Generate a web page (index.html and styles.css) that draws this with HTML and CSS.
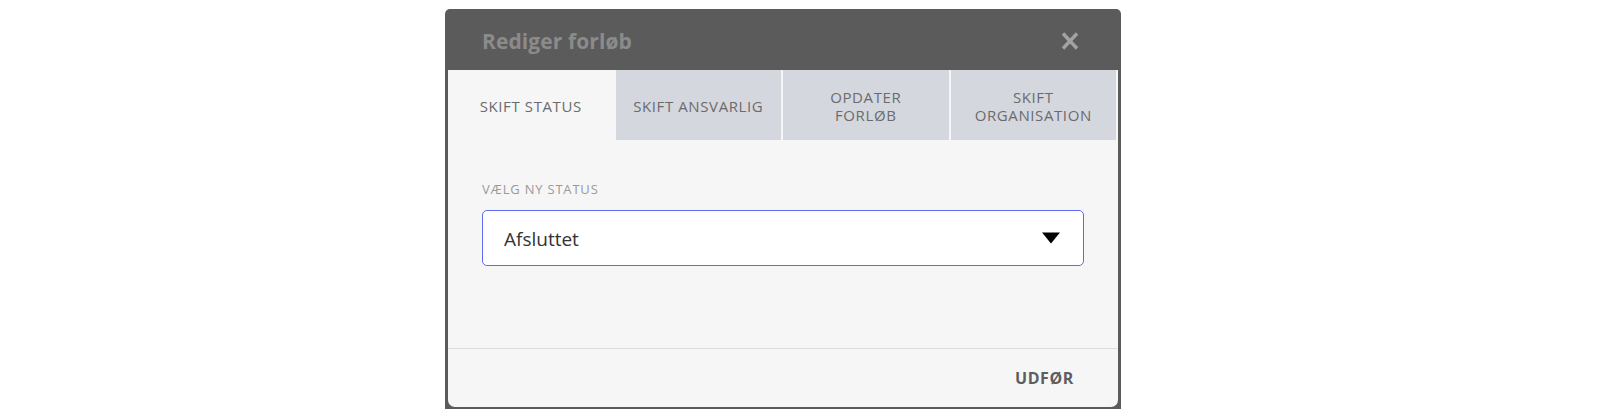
FILE: index.html
```html
<!DOCTYPE html>
<html lang="da">
<head>
<meta charset="utf-8">
<link rel="stylesheet" href="styles.css">
</head>
<body>
<div class="modal">
  <div class="modal-header">
    <h1 class="modal-title">Rediger forløb</h1>
    <button class="close" aria-label="Luk">
      <svg width="20" height="18" viewBox="0 0 20 18"><path d="M3 1.5 L17 16.5 M17 1.5 L3 16.5" stroke="#a2a2a2" stroke-width="3.4" stroke-linecap="butt"/></svg>
    </button>
  </div>
  <div class="modal-panel">
    <div class="tabs">
      <div class="tab active">SKIFT STATUS</div>
      <div class="tab">SKIFT ANSVARLIG</div>
      <div class="tab">OPDATER<br>FORLØB</div>
      <div class="tab">SKIFT<br>ORGANISATION</div>
    </div>
    <div class="modal-body">
      <div class="field-label">VÆLG NY STATUS</div>
      <div class="select">
        <span class="select-value">Afsluttet</span>
        <svg class="caret" width="20" height="12" viewBox="0 0 20 12"><path d="M1 0.5 H19 L10 11.5 Z" fill="#000"/></svg>
      </div>
    </div>
    <div class="modal-footer">
      <button class="action">UDFØR</button>
    </div>
  </div>
</div>
</body>
</html>
```
FILE: styles.css
```css
html, body {
  margin: 0;
  padding: 0;
  background: #ffffff;
}
body {
  font-family: "Open Sans", "Noto Sans", sans-serif;
}
.modal {
  margin: 9px 0 0 445px;
  width: 676px;
  height: 400px;
  box-sizing: border-box;
  background: #5b5b5b;
  border-radius: 5px 5px 0 0;
  padding: 0 3px 2px 3px;
  display: flex;
  flex-direction: column;
}
.modal-header {
  height: 61px;
  flex: none;
  display: flex;
  align-items: center;
  justify-content: space-between;
  padding: 0 38px 0 34px;
}
.modal-title {
  margin: 0;
  font-size: 21px;
  font-weight: 700;
  color: #8b8b8b;
  letter-spacing: 0.1px;
  position: relative;
  top: 1px;
}
.close {
  border: 0;
  background: none;
  padding: 0;
  width: 20px;
  height: 18px;
  display: flex;
  cursor: pointer;
  position: relative;
  top: 1px;
}
.modal-panel {
  flex: 1;
  background: #f6f6f6;
  border-radius: 0 0 7px 7px;
  display: flex;
  flex-direction: column;
}
.tabs {
  display: flex;
  gap: 2px;
  padding-right: 2px;
  height: 70px;
  flex: none;
}
.tab {
  flex: 1;
  background: #d5d7de;
  color: #6b6b6b;
  font-size: 15px;
  letter-spacing: 0.6px;
  line-height: 18px;
  text-align: center;
  display: flex;
  align-items: center;
  justify-content: center;
  padding-top: 1px;
}
.tab.active {
  background: #f6f6f6;
}
.modal-body {
  flex: 1;
  padding: 41px 34px 0 34px;
}
.field-label {
  font-size: 13px;
  letter-spacing: 0.8px;
  color: #9a9a9a;
  line-height: 16px;
  margin-bottom: 13px;
}
.select {
  height: 56px;
  box-sizing: border-box;
  background: #ffffff;
  border: 1.5px solid #5f6af2;
  border-radius: 5px;
  display: flex;
  align-items: center;
  justify-content: space-between;
  padding: 0 22px 0 21px;
}
.select-value {
  font-size: 19px;
  color: #333333;
  position: relative;
  top: 1px;
}
.caret {
  display: block;
}
.modal-footer {
  height: 58px;
  flex: none;
  border-top: 1px solid #dcdcdc;
  display: flex;
  align-items: center;
  justify-content: flex-end;
  padding-right: 44px;
}
.action {
  border: 0;
  background: none;
  padding: 0;
  font-family: inherit;
  font-size: 16px;
  font-weight: 700;
  color: #5e5e5e;
  letter-spacing: 0.6px;
  cursor: pointer;
}
```
